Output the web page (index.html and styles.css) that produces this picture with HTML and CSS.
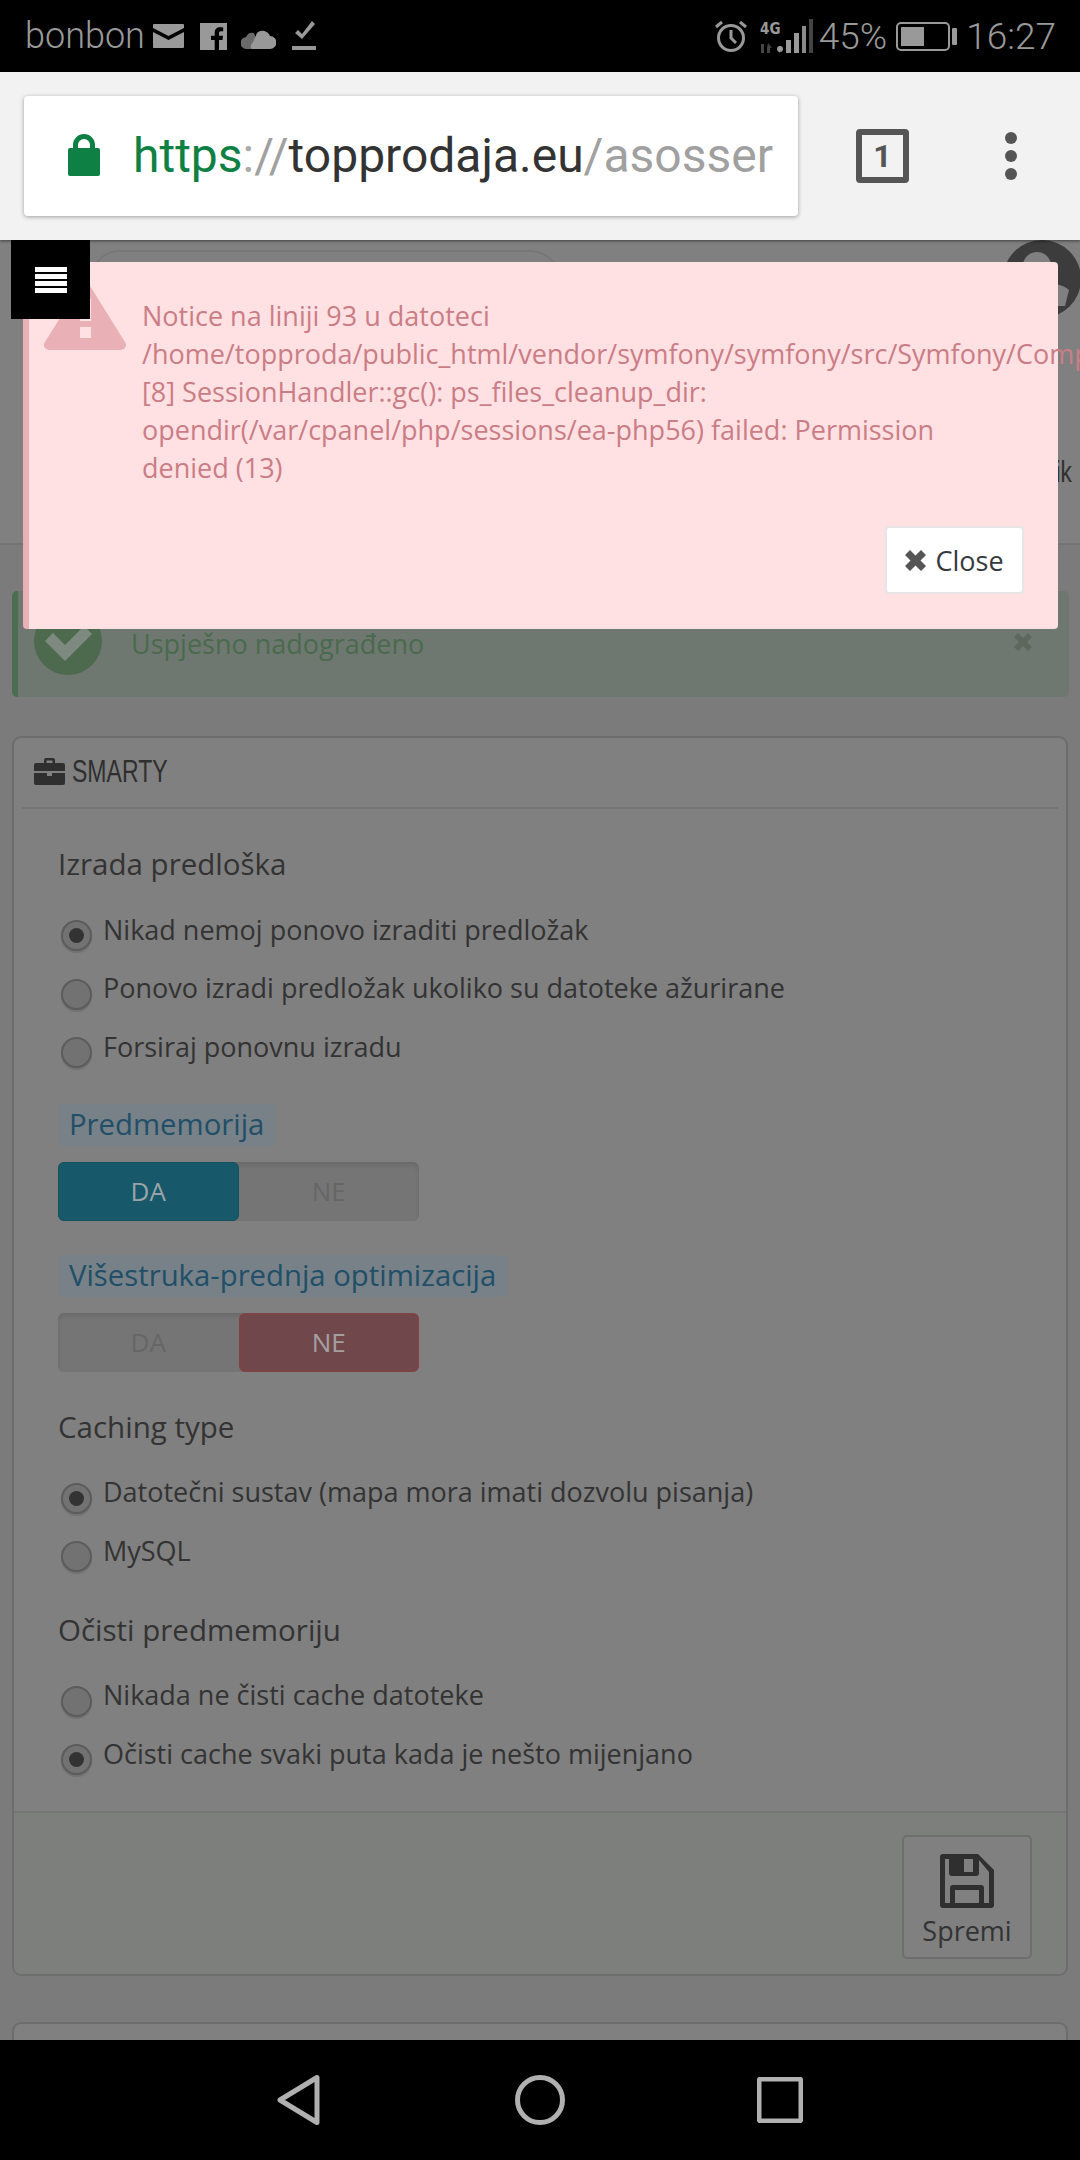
FILE: index.html
```html
<!DOCTYPE html>
<html lang="hr">
<head>
  <meta charset="UTF-8">
  <meta name="viewport" content="width=device-width, initial-scale=1.0">
  <title>SMARTY</title>
  <link rel="stylesheet" href="styles.css">
</head>
<body>
  <!-- Status bar -->
  <div class="statusbar">
    <div class="status-left">
      <span class="carrier">bonbon</span>
      <svg class="ic-mail" viewBox="0 0 31 24"><path d="M1 0h29a1 1 0 0 1 1 1v3L15.500 12 0 4V1a1 1 0 0 1 1-1zM0 8l15.500 8L31 8v15a1 1 0 0 1-1 1H1a1 1 0 0 1-1-1z"/></svg>
      <svg class="ic-fb" viewBox="0 0 27 27"><path d="M0 0h27v27h-8V17h3.500l.5-4.200h-4V10.300c0-1.200.4-2 2-2h2.200V4.500c-.4-.1-1.700-.2-3.200-.2-3.100 0-5.300 1.900-5.300 5.400v3.100H11V17h3.700v10H0z"/></svg>
      <svg class="ic-cloud" viewBox="0 0 35 25"><path fill="#6a6a6a" d="M6 25a6 6 0 0 1-1-12 7 7 0 0 1 8-4l6 16z"/><path d="M12 25c-3 0-3-4 0-7l4-9a8 8 0 0 1 13 3 6.500 6.500 0 0 1 0 13z"/></svg>
      <svg class="ic-done" viewBox="0 0 24 29"><path d="M0 25h24v4H0zM3 12l3-3 4 4L20 0l3 3-13 15z"/></svg>
    </div>
    <div class="status-right">
      <svg class="ic-alarm" viewBox="0 0 32 32"><circle cx="16" cy="18" r="12.500" fill="none" stroke="#999" stroke-width="3"/><path d="M16 10v8l5 5" fill="none" stroke="#999" stroke-width="3"/><path d="M1 7l6-5M31 7l-6-5" stroke="#999" stroke-width="3"/></svg>
      <svg class="ic-signal" viewBox="0 0 54 34">
        <text x="1" y="15" class="sig-text">4G</text>
        <path fill="#444" d="M2 25h3v9H2zM9 24l4 5h-2v5H8v-5zM20 33h1v1h-1z"/>
        <circle cx="21" cy="30" r="3"/>
        <rect x="27" y="21" width="5" height="13"/>
        <rect x="35" y="14" width="5" height="20"/>
        <rect x="43" y="7" width="4" height="27" opacity=".9"/>
        <rect x="50" y="0" width="4" height="34" fill="#444"/>
      </svg>
      <span class="status-pct">45%</span>
      <div class="battery"><div class="battery-fill"></div></div>
      <div class="battery-nub"></div>
      <span class="status-time">16:27</span>
    </div>
  </div>

  <!-- Chrome toolbar -->
  <div class="toolbar">
    <div class="urlbox">
      <svg class="ic-lock" viewBox="0 0 32 42"><path d="M2 14h3V11a11 11 0 0 1 22 0v3h3a2 2 0 0 1 2 2v24a2 2 0 0 1-2 2H2a2 2 0 0 1-2-2V16a2 2 0 0 1 2-2zM10 14h12V11a6 6 0 0 0-12 0z"/></svg>
      <div class="url"><span class="u-green">https</span><span class="u-colon">:</span><span class="u-slash">//</span><span class="u-dark">topprodaja.eu</span><span class="u-gray">/asosser</span></div>
    </div>
    <div class="tabcount">1</div>
    <div class="menu-dots"><i></i><i></i><i></i></div>
  </div>

  <div class="page">
    <div class="site-head">
      <div class="head-top">
        <div class="search-pill"></div>
        <svg class="avatar" viewBox="0 0 78 78"><circle cx="39" cy="39" r="39" fill="#3c3c3c"/><circle cx="34" cy="26" r="14" fill="#808080"/><path d="M12 62c4-18 16-20 24-20s24 2 30 8l-4 16H16z" fill="#808080"/></svg>
      </div>
      <div class="head-link"><span>ik</span></div>
    </div>

    <div class="alert-ok">
      <svg class="ic-okcircle" viewBox="0 0 68 68"><circle cx="34" cy="34" r="34" fill="#4d6a4f"/><path d="M11 34l8-8 12 12 19-19 8 8-27 27z" fill="#7e8a80"/></svg>
      <span class="alert-text">Uspješno nadograđeno</span>
      <svg class="ic-x-small" viewBox="0 0 18 18"><path d="M4 0l5 5 5-5 4 4-5 5 5 5-4 4-5-5-5 5-4-4 5-5-5-5z"/></svg>
    </div>

    <div class="panel">
      <div class="panel-head">
        <svg class="ic-case" viewBox="0 0 31 27"><path d="M10 5V2a2 2 0 0 1 2-2h7a2 2 0 0 1 2 2v3h8a2 2 0 0 1 2 2v6H0V7a2 2 0 0 1 2-2zM12.500 5h6V2.500h-6zM0 15h13v3h5v-3h13v10a2 2 0 0 1-2 2H2a2 2 0 0 1-2-2z"/></svg>
        <span class="panel-title">SMARTY</span>
      </div>

      <div class="panel-body">
        <div class="field-title first">Izrada predloška</div>
        <div class="radios">
          <div class="radio-row"><span class="radio on"></span>Nikad nemoj ponovo izraditi predložak</div>
          <div class="radio-row"><span class="radio"></span>Ponovo izradi predložak ukoliko su datoteke ažurirane</div>
          <div class="radio-row"><span class="radio"></span>Forsiraj ponovnu izradu</div>
        </div>

        <div class="hint-label l-first">Predmemorija</div>
        <div class="switch">
          <div class="sw-item sw-yes">DA</div>
          <div class="sw-item">NE</div>
        </div>

        <div class="hint-label l-second">Višestruka-prednja optimizacija</div>
        <div class="switch">
          <div class="sw-item">DA</div>
          <div class="sw-item sw-no">NE</div>
        </div>

        <div class="field-title t-cache">Caching type</div>
        <div class="radios">
          <div class="radio-row"><span class="radio on"></span>Datotečni sustav (mapa mora imati dozvolu pisanja)</div>
          <div class="radio-row"><span class="radio"></span>MySQL</div>
        </div>

        <div class="field-title t-clear">Očisti predmemoriju</div>
        <div class="radios">
          <div class="radio-row"><span class="radio"></span>Nikada ne čisti cache datoteke</div>
          <div class="radio-row"><span class="radio on"></span>Očisti cache svaki puta kada je nešto mijenjano</div>
        </div>
      </div>

      <div class="panel-foot">
        <div class="save-btn">
          <svg class="ic-save" viewBox="0 0 54 54"><path fill-rule="evenodd" d="M3 0h35l16 16v35a3 3 0 0 1-3 3H3a3 3 0 0 1-3-3V3a3 3 0 0 1 3-3zM5 5v44h5V34a3 3 0 0 1 3-3h28a3 3 0 0 1 3 3v15h5V18L39 6v13a3 3 0 0 1-3 3H12a3 3 0 0 1-3-3V5zM15 36v13h24V36zM24 5v13h9V5z" fill="#2f2f2f"/></svg>
          <span>Spremi</span>
        </div>
      </div>
    </div>

    <div class="panel panel-next"></div>

    <!-- Error popup over the page -->
    <div class="error-box">
      <svg class="ic-warn" viewBox="0 0 82 72"><path fill-rule="evenodd" d="M41 0L81 64a5 5 0 0 1-4 8H5a5 5 0 0 1-4-8zM36 21v22h11V21zM36 49v11h11V49z"/></svg>
      <div class="error-text">
        Notice na liniji 93 u datoteci<br>
        <span class="nowrap">/home/topproda/public_html/vendor/symfony/symfony/src/Symfony/Component/HttpFoundation</span><br>
        [8] SessionHandler::gc(): ps_files_cleanup_dir:<br>
        opendir(/var/cpanel/php/sessions/ea-php56) failed: Permission<br>
        denied (13)
      </div>
      <div class="close-btn">
        <svg class="ic-x" viewBox="0 0 21 21"><path d="M5 0l5.500 5.500L16 0l5 5-5.500 5.500L21 16l-5 5-5.500-5.500L5 21l-5-5 5.500-5.500L0 5z"/></svg>
        Close
      </div>
    </div>

    <div class="burger"><i></i><i></i><i></i><i></i></div>
  </div>

  <!-- Android nav -->
  <div class="navbar">
    <svg class="nav-ic nav-back" viewBox="0 0 44 50"><path d="M3 25L40 2.500v45z"/></svg>
    <svg class="nav-ic nav-home" viewBox="0 0 50 50"><circle cx="25" cy="25" r="22.500"/></svg>
    <svg class="nav-ic nav-recent" viewBox="0 0 46 46"><rect x="2" y="2" width="42" height="42" rx="2"/></svg>
  </div>
</body>
</html>
```

FILE: styles.css
```css
* {
  box-sizing: border-box;
}

html, body {
  margin: 0;
  height: 2160px;
  overflow: hidden;
}

body {
  width: 1080px;
  display: flex;
  flex-direction: column;
  font-family: "Open Sans", sans-serif;
  background-color: #808080;
}

/* Status bar */
.statusbar {
  height: 72px;
  background-color: #000;
  color: #999;
  font-family: Roboto, sans-serif;
  font-weight: 300;
  font-size: 36px;
  display: flex;
  justify-content: space-between;
  align-items: center;
  padding: 0 24px 0 25px;
}

.status-left, .status-right {
  display: flex;
  align-items: center;
}

.status-left svg, .status-right svg {
  fill: #999;
  display: block;
}

.carrier {
  width: 128px;
}

.ic-mail { width: 31px; height: 24px; margin-top: -1px; }
.ic-fb { width: 27px; height: 27px; margin-left: 16px; }
.ic-cloud { width: 35px; height: 25px; margin-left: 14px; }
.ic-done { width: 24px; height: 29px; margin-left: 16px; margin-top: -2px; }

.ic-alarm { width: 32px; height: 32px; }
.ic-signal { width: 54px; height: 34px; margin-left: 12px; }

.sig-text {
  font-family: "DejaVu Sans Condensed", "DejaVu Sans", sans-serif;
  font-size: 15px;
  font-weight: 700;
  fill: #999;
}

.status-pct {
  margin-left: 6px;
  font-size: 37px;
}

.battery {
  width: 54px;
  height: 29px;
  margin-left: 9px;
  border: 2px solid #999;
  border-radius: 5px;
  padding: 3px;
}

.battery-fill {
  width: 23px;
  height: 100%;
  background-color: #999;
}

.battery-nub {
  width: 5px;
  height: 17px;
  margin-left: 2px;
  background-color: #999;
  border-radius: 1px;
}

.status-time {
  margin-left: 9px;
  font-size: 37px;
}

/* Toolbar */
.toolbar {
  height: 168px;
  background-color: #f2f2f2;
  display: flex;
  align-items: center;
  padding: 0 0 0 24px;
  position: relative;
  z-index: 5;
  box-shadow: 0 1px 3px rgba(0, 0, 0, 0.5);
}

.urlbox {
  width: 774px;
  height: 120px;
  background-color: #fff;
  border-radius: 4px;
  box-shadow: 0 1px 4px rgba(0, 0, 0, 0.35);
  display: flex;
  align-items: center;
  padding-left: 44px;
  overflow: hidden;
}

.ic-lock {
  width: 32px;
  height: 42px;
  fill: #0e8043;
  flex: none;
  margin-top: -2px;
}

.url {
  margin-left: 33px;
  width: 640px;
  overflow: hidden;
  white-space: nowrap;
  font-family: Roboto, sans-serif;
  font-size: 48px;
  line-height: 60px;
  margin-top: -1px;
}

.u-green { color: #0e8043; }
.u-colon { color: #aaa; }
.u-slash { color: #a0a0a0; }
.u-dark { color: #333; }
.u-gray { color: #a0a0a0; }

.tabcount {
  width: 53px;
  height: 54px;
  margin-left: 58px;
  border: 6px solid #555;
  border-radius: 4px;
  color: #555;
  font-family: Roboto, sans-serif;
  font-weight: 700;
  font-size: 32px;
  display: flex;
  align-items: center;
  justify-content: center;
}

.menu-dots {
  margin-left: 96px;
  display: flex;
  flex-direction: column;
  gap: 6px;
}

.menu-dots i {
  display: block;
  width: 12px;
  height: 12px;
  border-radius: 50%;
  background-color: #555;
}

/* Page */
.page {
  flex: 1;
  position: relative;
  overflow: hidden;
  background-color: #7a7b7a;
}

.site-head {
  height: 305px;
  background-color: #808080;
  border-bottom: 2px solid #747474;
}

.head-top {
  display: flex;
  justify-content: space-between;
  align-items: flex-start;
  padding: 10px 0 0 90px;
}

.search-pill {
  width: 470px;
  height: 60px;
  border: 2px solid #777;
  border-radius: 30px;
}

.avatar {
  width: 78px;
  height: 78px;
  margin-top: -10px;
  margin-right: -1px;
}

.head-link {
  margin-top: 134px;
  padding-right: 8px;
  text-align: right;
  color: #2f2f2f;
  font-family: "Liberation Sans", sans-serif;
  font-size: 30px;
  line-height: 40px;
}

.head-link span {
  display: inline-block;
  transform: scaleX(0.75);
  transform-origin: right center;
}

.alert-ok {
  height: 106px;
  margin: 46px 11px 0 12px;
  background-color: #6e7870;
  border-left: 6px solid #4a6e4f;
  border-radius: 5px;
  display: flex;
  align-items: center;
  padding-left: 16px;
  position: relative;
}

.ic-okcircle {
  width: 68px;
  height: 68px;
  margin-top: -7px;
  flex: none;
}

.alert-text {
  margin-left: 29px;
  color: #4a6a4d;
  font-size: 27px;
  margin-top: -2px;
}

.ic-x-small {
  width: 18px;
  height: 18px;
  margin-left: auto;
  margin-right: 37px;
  margin-top: -5px;
  fill: #5c675e;
}

.panel {
  margin: 39px 12px 0 12px;
  height: 1240px;
  border: 2px solid #6d6d6d;
  border-radius: 9px;
  background-color: #808080;
  display: flex;
  flex-direction: column;
}

.panel-head {
  height: 71px;
  margin: 0 8px;
  padding-left: 12px;
  border-bottom: 2px solid #757575;
  display: flex;
  align-items: center;
  color: #2f2f2f;
}

.ic-case {
  width: 31px;
  height: 27px;
  fill: #2f2f2f;
  margin-top: -2px;
  flex: none;
}

.panel-title {
  display: inline-block;
  margin-left: 7px;
  margin-top: -4px;
  font-family: "Liberation Sans", sans-serif;
  font-size: 32px;
  line-height: 40px;
  transform: scaleX(0.72);
  transform-origin: left center;
}

.panel-body {
  flex: 1;
  padding-left: 44px;
  color: #333;
  font-size: 27px;
}

.field-title {
  font-size: 29.500px;
  line-height: 38px;
}

.field-title.first { margin-top: 36px; }
.field-title.t-cache { margin-top: 36px; }
.field-title.t-clear { margin-top: 31px; }

.radios {
  margin-top: 17px;
}

.radio-row {
  height: 58.500px;
  display: flex;
  align-items: center;
}

.radio {
  width: 31px;
  height: 31px;
  margin: 13px 11px 0 3px;
  flex: none;
  border: 2px solid #5c5c5c;
  border-radius: 50%;
  background-color: #727272;
  box-shadow: 0 2px 1px rgba(0, 0, 0, 0.12);
  display: flex;
  align-items: center;
  justify-content: center;
}

.radio.on::after {
  content: '';
  width: 15px;
  height: 15px;
  border-radius: 50%;
  background-color: #333;
}

.hint-label {
  display: table;
  height: 42px;
  padding: 0 11px;
  line-height: 41px;
  border-radius: 4px;
  background-color: #778187;
  color: #214f67;
  font-size: 29.300px;
}

.l-first { margin-top: 28px; }
.l-second { margin-top: 34px; }

.switch {
  width: 361px;
  height: 59px;
  margin-top: 16px;
  display: flex;
  background-color: #757575;
  border-radius: 6px;
  box-shadow: inset 0 3px 4px rgba(0, 0, 0, 0.1);
}

.sw-item {
  flex: 0 0 50%;
  display: flex;
  align-items: center;
  justify-content: center;
  border-radius: 6px;
  color: #666;
  font-size: 26px;
}

.sw-yes {
  background-color: #17586a;
  border: 1px solid #14505f;
  color: #9aa4a8;
}

.sw-no {
  background-color: #70474b;
  border: 2px solid #7d4347;
  color: #a5a0a0;
}

.panel-foot {
  height: 163px;
  margin-top: auto;
  background-color: #7d7f7d;
  border-top: 2px solid #757775;
  border-radius: 0 0 8px 8px;
  display: flex;
  justify-content: flex-end;
  padding: 22px 34px 0 0;
}

.save-btn {
  width: 130px;
  height: 124px;
  border: 2px solid #6e6e6e;
  border-radius: 5px;
  background-color: #808080;
  color: #333;
  font-size: 27px;
  display: flex;
  flex-direction: column;
  align-items: center;
  padding-top: 17px;
}

.ic-save {
  width: 54px;
  height: 54px;
}

.save-btn span {
  line-height: 36px;
  margin-top: 5px;
}

.panel-next {
  margin-top: 46px;
  height: 60px;
}

/* Error popup */
.error-box {
  position: absolute;
  top: 22px;
  left: 23px;
  width: 1035px;
  height: 367px;
  background-color: #ffe1e3;
  border-left: 6px solid #e9b0b6;
  border-radius: 4px;
  z-index: 3;
}

.ic-warn {
  position: absolute;
  top: 16px;
  left: 15px;
  width: 82px;
  height: 72px;
  fill: #e9b0b6;
}

.error-text {
  position: absolute;
  top: 35px;
  left: 113px;
  color: #cb7d85;
  font-size: 27px;
  line-height: 38px;
  white-space: nowrap;
}

.close-btn {
  position: absolute;
  top: 264px;
  right: 34px;
  width: 139px;
  height: 68px;
  background-color: #fff;
  border: 2px solid #e6e6e6;
  border-radius: 4px;
  color: #363a3e;
  font-size: 27px;
  display: flex;
  align-items: center;
  justify-content: center;
  gap: 9px;
}

.ic-x {
  width: 21px;
  height: 21px;
  fill: #555;
}

.burger {
  position: absolute;
  top: 0;
  left: 11px;
  width: 79px;
  height: 79px;
  background-color: #000;
  z-index: 4;
  display: flex;
  flex-direction: column;
  justify-content: center;
  align-items: center;
  gap: 2px;
  padding-top: 1px;
}

.burger i {
  display: block;
  width: 32px;
  height: 5px;
  background-color: #fff;
}

/* Nav bar */
.navbar {
  height: 120px;
  background-color: #000;
  display: flex;
  align-items: center;
  flex: none;
  position: relative;
  z-index: 5;
  padding-left: 277px;
}

.nav-ic {
  fill: none;
  stroke: #b0b0b0;
  stroke-width: 5;
  stroke-linejoin: round;
}

.nav-back { width: 44px; height: 50px; }
.nav-home { width: 50px; height: 50px; margin-left: 194px; }
.nav-recent { width: 46px; height: 46px; margin-left: 192px; }
```
